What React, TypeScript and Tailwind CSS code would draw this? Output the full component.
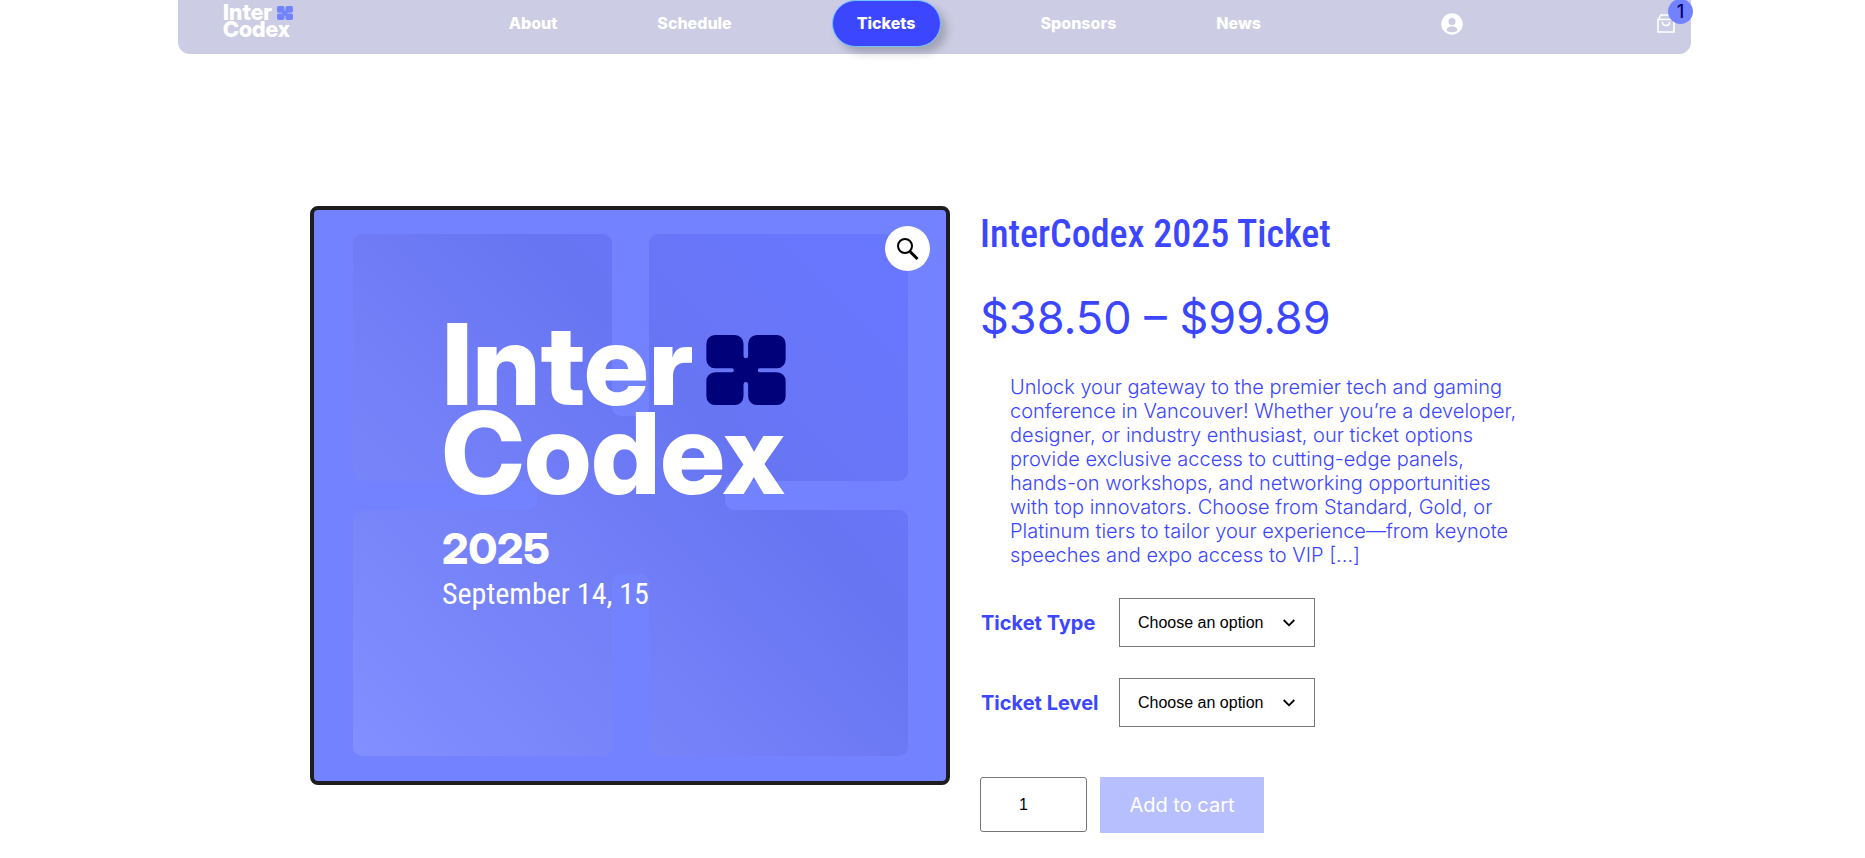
import React from "react";

const MARK_PATH =
  "M26 0H86a26 26 0 0 1 26 26V63a7 7 0 0 0 14 0V26a26 26 0 0 1 26-26H213a26 26 0 0 1 26 26V74a26 26 0 0 1-26 26H161a6 6 0 0 0 0 12H213a26 26 0 0 1 26 26V185a26 26 0 0 1-26 26H152a26 26 0 0 1-26-26V149a7 7 0 0 0-14 0V185a26 26 0 0 1-26 26H26a26 26 0 0 1-26-26V138a26 26 0 0 1 26-26H77a6 6 0 0 0 0-12H26a26 26 0 0 1-26-26V26a26 26 0 0 1 26-26z";

const TILES_PATH =
  "M52 28H293a9 9 0 0 1 9 9V201a9 9 0 0 0 9 9H330a9 9 0 0 0 9-9V37a9 9 0 0 1 9-9H589a9 9 0 0 1 9 9V266a9 9 0 0 1-9 9H424a9 9 0 0 0-9 9V295a9 9 0 0 0 9 9H589a9 9 0 0 1 9 9V541a9 9 0 0 1-9 9H348a9 9 0 0 1-9-9V377a9 9 0 0 0-9-9H311a9 9 0 0 0-9 9V541a9 9 0 0 1-9 9H52a9 9 0 0 1-9-9V313a9 9 0 0 1 9-9H218a9 9 0 0 0 9-9V284a9 9 0 0 0-9-9H52a9 9 0 0 1-9-9V37a9 9 0 0 1 9-9z";

const NAV_ITEMS = ["About", "Schedule", "Tickets", "Sponsors", "News"];

function Logo() {
  return (
    <a href="#home" aria-label="InterCodex" className="block">
      <svg viewBox="0 0 70 40" className="h-10 w-[70px] overflow-visible" fill="#fff">
        <g fontFamily="'Inter Display', Inter, sans-serif" fontWeight="800" fontSize="22">
          <text x="-1" y="20">Inter</text>
          <text x="-1" y="37">Codex</text>
        </g>
        <svg x="53" y="6" width="16" height="14" viewBox="0 0 239 211" preserveAspectRatio="none">
          <path d={MARK_PATH} fill="#7383ff" />
        </svg>
      </svg>
    </a>
  );
}

function Header() {
  return (
    <header className="pr-[174px] pl-[178px]">
      <div className="grid h-[54px] grid-cols-[259fr_auto_331fr_57fr] items-start rounded-b-xl bg-[#cccce4] pr-4 pl-[46px]">
        <Logo />
        <nav className="flex">
          {NAV_ITEMS.map((item) =>
            item === "Tickets" ? (
              <a
                key={item}
                href="#tickets"
                aria-current="page"
                className="mx-[75px] flex h-[47px] items-center rounded-full border border-[#70c4ff] bg-[#3c46ff] px-6 pb-0.5 text-base font-extrabold text-white shadow-[6px_6px_9px_rgba(0,0,0,0.2)]"
              >
                {item}
              </a>
            ) : (
              <a
                key={item}
                href={"#" + item.toLowerCase()}
                className="flex h-[47px] items-center px-[25px] pb-0.5 text-base font-extrabold text-white [&+a:not([aria-current])]:ml-[50px]"
              >
                {item}
              </a>
            ),
          )}
        </nav>
        <a href="#account" aria-label="Account" className="mt-[13px] justify-self-center">
          <svg viewBox="0 0 22 22" className="size-[22px]">
            <circle cx="11" cy="11" r="10.7" fill="#fff" />
            <circle cx="11" cy="8.6" r="3.5" fill="#cccce4" />
            <path d="M5.4 17.2c.8-2.6 3-3.9 5.6-3.9s4.8 1.3 5.6 3.9C15.2 18.5 13.2 19.3 11 19.3s-4.2-.8-5.6-2.1z" fill="#cccce4" />
          </svg>
        </a>
        <a href="#cart" aria-label="Cart" className="relative mt-[14px] justify-self-end">
          <svg viewBox="0 0 18 19" className="h-[19px] w-[18px]" fill="none" stroke="#fff" strokeWidth="1.6">
            <path d="M1 5.5V18H17V5.5L14 1H4zM1 5.5H17" />
            <path d="M5.5 8c0 4.8 7 4.8 7 0" />
          </svg>
          <span className="absolute -top-[15px] -right-[18px] flex size-[25px] items-center justify-center rounded-full bg-[#7383ff] text-lg font-medium text-[#01017a]">
            1
          </span>
        </a>
      </div>
    </header>
  );
}

function Poster() {
  return (
    <svg viewBox="0 0 640 579" className="block w-full" role="img" aria-label="InterCodex 2025 poster">
      <defs>
        <linearGradient id="tiles" gradientUnits="userSpaceOnUse" x1="44" y1="550" x2="598" y2="28">
          <stop offset="0" stopColor="#828fff" />
          <stop offset="0.64" stopColor="#6875f2" />
          <stop offset="0.82" stopColor="#6876fb" />
          <stop offset="1" stopColor="#6777ff" />
        </linearGradient>
      </defs>
      <rect x="2" y="2" width="636" height="575" rx="6" fill="#7383ff" stroke="#1d1d1f" strokeWidth="4" />
      <path d={TILES_PATH} fill="url(#tiles)" />
      <g fill="#fff" fontFamily="'Inter Display', Inter, sans-serif" fontWeight="800">
        <text x="132" y="199" fontSize="113">Inter</text>
        <text x="132" y="288" fontSize="113">Codex</text>
        <text x="132" y="358" fontSize="43">2025</text>
      </g>
      <svg x="396" y="129" width="80" height="70" viewBox="0 0 239 211">
        <path d={MARK_PATH} fill="#01017a" />
      </svg>
      <text x="132" y="398" fill="#fff" fontSize="30" fontFamily="'Roboto Condensed', 'Liberation Sans', sans-serif">
        September 14, 15
      </text>
    </svg>
  );
}

function OptionRow({ id, label }: { id: string; label: string }) {
  return (
    <div className="flex items-center">
      <label htmlFor={id} className="w-[139px] pl-px text-xl font-bold">
        {label}
      </label>
      <div className="relative">
        <select
          id={id}
          className="h-[49px] w-[196px] appearance-none border border-[#767676] bg-white pl-[18px] font-['Liberation_Sans',sans-serif] text-base text-black"
        >
          <option>Choose an option</option>
        </select>
        <svg viewBox="0 0 12 8" className="pointer-events-none absolute top-[21px] right-5 h-2 w-3" fill="none" stroke="#000" strokeWidth="1.8">
          <path d="M.7 1L6 6.3 11.3 1" />
        </svg>
      </div>
    </div>
  );
}

export default function App() {
  return (
    <div className="bg-white font-['Inter',sans-serif] text-[#3c46ff]">
      <Header />
      <main className="mx-auto mt-[152px] grid max-w-[1245px] grid-cols-[640fr_575fr] items-start gap-[30px]">
        <div className="relative">
          <Poster />
          <button
            type="button"
            aria-label="Zoom image"
            className="absolute top-5 right-5 flex size-[45px] items-center justify-center rounded-full bg-white"
          >
            <svg viewBox="0 0 22 22" className="size-[22px]" fill="none" stroke="#000">
              <circle cx="8" cy="8" r="7" strokeWidth="2" />
              <path d="M13 13.5L20.5 21" strokeWidth="3" />
            </svg>
          </button>
        </div>
        <div>
          <h1 className="font-['Roboto_Condensed','Liberation_Sans',sans-serif] text-[38px] leading-[56px] font-medium">
            InterCodex 2025 Ticket
          </h1>
          <p className="mt-7 text-[45px] leading-[56px] font-normal">$38.50 – $99.89</p>
          <p className="mt-[29px] pr-6 pl-[30px] text-xl leading-6 font-light">
            Unlock your gateway to the premier tech and gaming conference in Vancouver! Whether you’re a developer,
            designer, or industry enthusiast, our ticket options provide exclusive access to cutting-edge panels,
            hands-on workshops, and networking opportunities with top innovators. Choose from Standard, Gold, or
            Platinum tiers to tailor your experience—from keynote speeches and expo access to VIP [...]
          </p>
          <form className="mt-[31px]" onSubmit={(e) => e.preventDefault()}>
            <div className="flex flex-col gap-[31px]">
              <OptionRow id="ticket-type" label="Ticket Type" />
              <OptionRow id="ticket-level" label="Ticket Level" />
            </div>
            <div className="mt-[50px] flex gap-[13px]">
              <input
                type="text"
                inputMode="numeric"
                aria-label="Quantity"
                defaultValue="1"
                className="h-[55px] w-[107px] rounded-[3px] border border-[#767676] bg-white pr-5 text-center font-['Liberation_Sans',sans-serif] text-base text-black"
              />
              <button type="submit" className="h-14 w-[164px] bg-[#b8bfff] text-xl text-white">
                Add to cart
              </button>
            </div>
          </form>
        </div>
      </main>
    </div>
  );
}
